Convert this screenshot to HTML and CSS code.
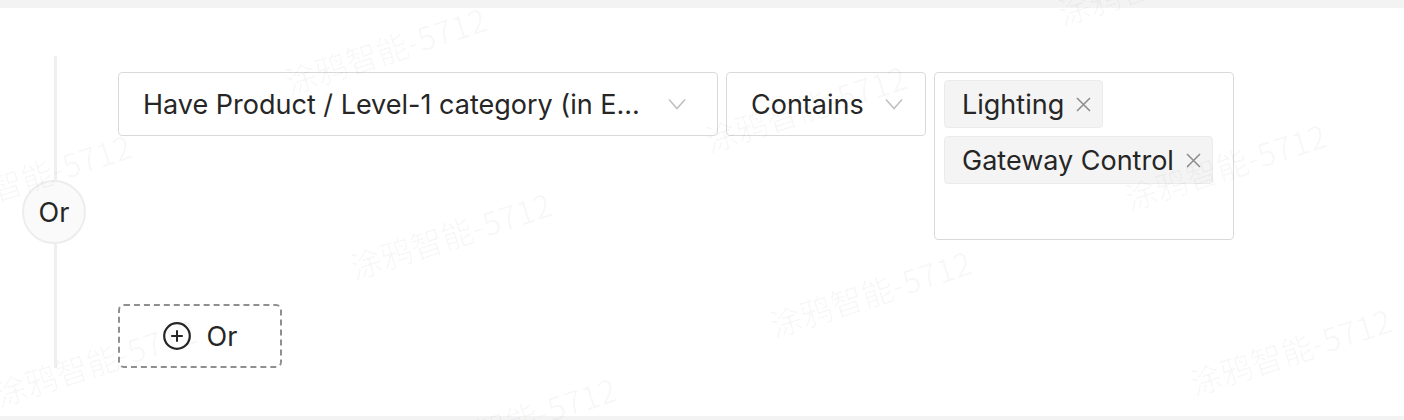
FILE: index.html
```html
<!DOCTYPE html>
<html lang="en">
<head>
<meta charset="utf-8">
<title>Condition group</title>
<link rel="stylesheet" href="styles.css">
</head>
<body>
<div class="band band-top"></div>
<main class="main">
  <div class="group">
    <div class="rail">
      <div class="rail-line"></div>
      <div class="rail-badge">Or</div>
      <div class="rail-line"></div>
    </div>
    <div class="rows">
      <div class="cond">
        <div class="select select-field">
          <span class="select-text">Have Product / Level-1 category (in E...</span>
          <svg class="chevron" width="18" height="12" viewBox="0 0 18 12"><polyline points="1,1.5 9,10.5 17,1.5" fill="none" stroke="#bfbfbf" stroke-width="1.5"/></svg>
        </div>
        <div class="select select-op">
          <span class="select-text">Contains</span>
          <svg class="chevron" width="18" height="12" viewBox="0 0 18 12"><polyline points="1,1.5 9,10.5 17,1.5" fill="none" stroke="#bfbfbf" stroke-width="1.5"/></svg>
        </div>
        <div class="tagbox">
          <span class="tag">Lighting<svg class="tag-close" width="15" height="15" viewBox="0 0 15 15"><path d="M1 1 L14 14 M14 1 L1 14" stroke="#8c8c8c" stroke-width="1.5" fill="none"/></svg></span>
          <span class="tag">Gateway Control<svg class="tag-close" width="15" height="15" viewBox="0 0 15 15"><path d="M1 1 L14 14 M14 1 L1 14" stroke="#8c8c8c" stroke-width="1.5" fill="none"/></svg></span>
        </div>
      </div>
      <button class="add-btn" type="button">
        <svg width="28" height="28" viewBox="0 0 28 28"><circle cx="14" cy="14" r="12.8" fill="none" stroke="#262626" stroke-width="2.2"/><path d="M14 8.2 V19.8 M8.2 14 H19.8" stroke="#262626" stroke-width="2" fill="none"/></svg>
        <span>Or</span>
      </button>
    </div>
  </div>
</main>
<div class="band band-bottom"></div>

<div class="watermarks" aria-hidden="true">
  <span class="wm" style="left:1063px;top:-4px">涂鸦智能-5712</span>
  <span class="wm" style="left:290px;top:65px">涂鸦智能-5712</span>
  <span class="wm" style="left:710px;top:123px">涂鸦智能-5712</span>
  <span class="wm" style="left:1130px;top:181px">涂鸦智能-5712</span>
  <span class="wm" style="left:-65px;top:192px">涂鸦智能-5712</span>
  <span class="wm" style="left:355px;top:250px">涂鸦智能-5712</span>
  <span class="wm" style="left:775px;top:308px">涂鸦智能-5712</span>
  <span class="wm" style="left:1195px;top:366px">涂鸦智能-5712</span>
  <span class="wm" style="left:0px;top:377px">涂鸦智能-5712</span>
  <span class="wm" style="left:420px;top:435px">涂鸦智能-5712</span>
</div>
</body>
</html>
```

FILE: styles.css
```css
* { box-sizing: border-box; }

html, body {
  margin: 0;
  padding: 0;
  width: 1404px;
  height: 420px;
  overflow: hidden;
  background: #ffffff;
  font-family: Inter, "Noto Sans", "Noto Sans CJK SC", sans-serif;
  color: #262626;
}

.band { background: #f3f3f3; }
.band-top { height: 8px; }
.band-bottom { height: 4px; }

.main {
  height: 408px;
  padding-top: 48px;
  background: #ffffff;
}

.group {
  display: flex;
  padding-left: 22px;
}

.rail {
  width: 64px;
  height: 312px;
  display: flex;
  flex-direction: column;
  flex-shrink: 0;
}

.rail-line {
  flex: 1;
  width: 3px;
  margin-left: 32px;
  background: #efefef;
}

.rail-badge {
  width: 64px;
  height: 64px;
  border: 2px solid #ededed;
  border-radius: 50%;
  background: #fafafa;
  display: flex;
  align-items: center;
  justify-content: center;
  font-size: 27px;
}

.rows {
  margin-left: 32px;
  padding-top: 16px;
  display: flex;
  flex-direction: column;
  align-items: flex-start;
  gap: 64px;
}

.cond {
  display: flex;
  align-items: flex-start;
  gap: 8px;
}

.select {
  height: 64px;
  border: 1px solid #d9d9d9;
  border-radius: 4px;
  background: #ffffff;
  display: flex;
  align-items: center;
  justify-content: space-between;
  padding-left: 24px;
  font-size: 27px;
}

.select-field { width: 600px; padding-right: 31px; }
.select-op { width: 200px; padding-right: 22px; }

.select-text { white-space: nowrap; }

.chevron { display: block; flex-shrink: 0; }

.tagbox {
  width: 300px;
  height: 168px;
  border: 1px solid #d9d9d9;
  border-radius: 4px;
  padding: 7px 9px;
  display: flex;
  flex-direction: column;
  align-items: flex-start;
  gap: 8px;
}

.tag {
  height: 48px;
  display: flex;
  align-items: center;
  gap: 12px;
  padding: 0 11px 0 17px;
  border: 1px solid #ebebeb;
  border-radius: 4px;
  background: #f4f4f4;
  font-size: 27px;
  white-space: nowrap;
}

.tag-close { display: block; }

.add-btn {
  width: 164px;
  height: 64px;
  padding: 0;
  border: 2px dashed #8f8f8f;
  border-radius: 6px;
  background: #ffffff;
  display: flex;
  align-items: center;
  justify-content: center;
  gap: 16px;
  font-family: inherit;
  font-size: 27px;
  color: #262626;
}

.add-btn svg { display: block; }

.watermarks {
  position: absolute;
  left: 0;
  top: 0;
  width: 1404px;
  height: 420px;
  overflow: hidden;
  pointer-events: none;
}

.wm {
  position: absolute;
  font-family: "Noto Sans CJK SC", "Noto Sans", sans-serif;
  font-size: 32px;
  line-height: 32px;
  white-space: nowrap;
  color: rgba(0, 0, 0, 0.03);
  transform-origin: 0 100%;
  transform: rotate(-18deg);
}
```
